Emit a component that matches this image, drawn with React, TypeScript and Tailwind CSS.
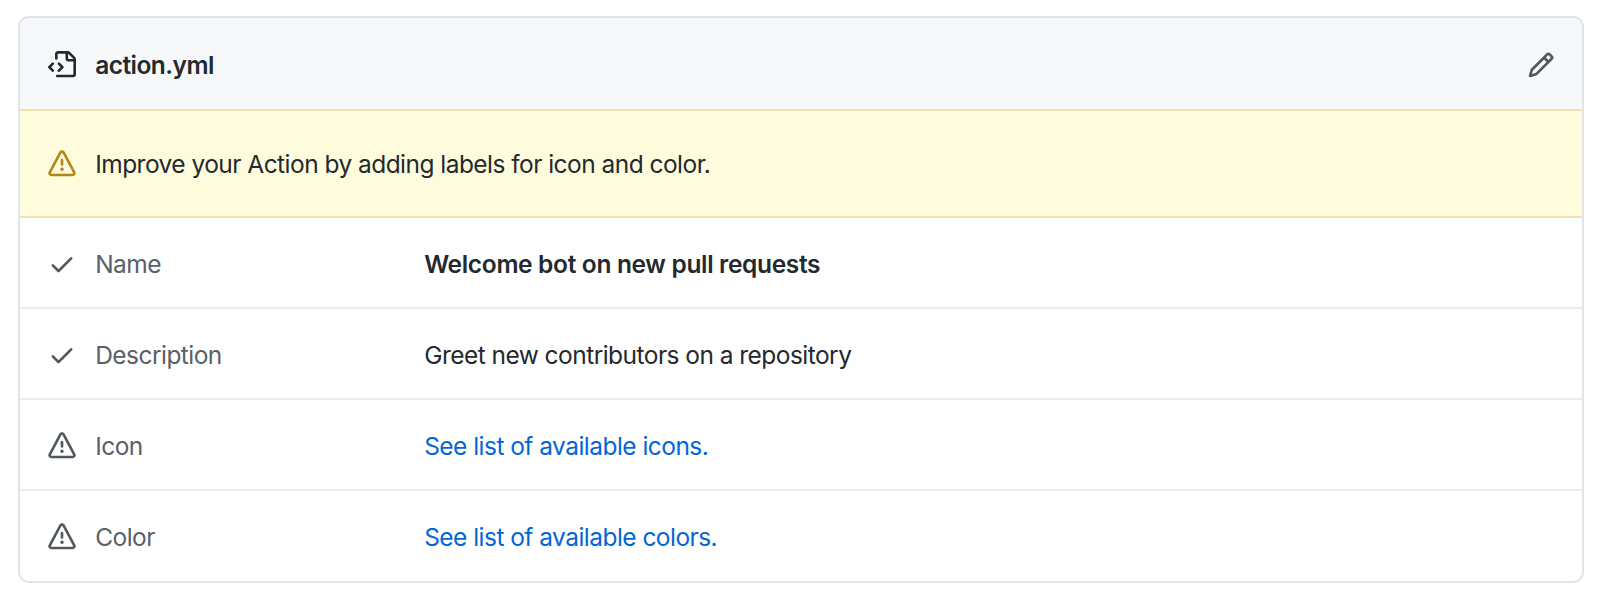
import type { ReactNode } from 'react';

const paths = {
  file: 'M4 1.75C4 .784 4.784 0 5.75 0h5.586c.464 0 .909.184 1.237.513l2.914 2.914c.329.328.513.773.513 1.237v8.586A1.75 1.75 0 0114.25 15h-9a.75.75 0 010-1.5h9a.25.25 0 00.25-.25V6h-2.75A1.75 1.75 0 0110 4.25V1.5H5.75a.25.25 0 00-.25.25v2.5a.75.75 0 01-1.5 0v-2.5zm7.5-.188V4.25c0 .138.112.25.25.25h2.688a.252.252 0 00-.011-.013l-2.914-2.914a.272.272 0 00-.013-.011zM5.72 6.72a.75.75 0 000 1.06l1.47 1.47-1.47 1.47a.75.75 0 101.06 1.06l2-2a.75.75 0 000-1.06l-2-2a.75.75 0 00-1.06 0zM3.28 7.78a.75.75 0 00-1.06-1.06l-2 2a.75.75 0 000 1.06l2 2a.75.75 0 001.06-1.06L1.81 9.25l1.47-1.47z',
  pencil: 'M11.013 1.427a1.75 1.75 0 012.474 0l1.086 1.086a1.75 1.75 0 010 2.474l-8.61 8.61c-.21.21-.47.364-.756.445l-3.251.93a.75.75 0 01-.927-.928l.929-3.25a1.75 1.75 0 01.445-.758l8.61-8.61zm1.414 1.06a.25.25 0 00-.354 0L10.811 3.75l1.439 1.44 1.263-1.263a.25.25 0 000-.354l-1.086-1.086zM11.189 6.25L9.75 4.81l-6.286 6.287a.25.25 0 00-.064.108l-.558 1.953 1.953-.558a.249.249 0 00.108-.064l6.286-6.286z',
  alert: 'M8.22 1.754a.25.25 0 00-.44 0L1.698 13.132a.25.25 0 00.22.368h12.164a.25.25 0 00.22-.368L8.22 1.754zm-1.763-.707c.659-1.234 2.427-1.234 3.086 0l6.082 11.378A1.75 1.75 0 0114.082 15H1.918a1.75 1.75 0 01-1.543-2.575L6.457 1.047zM9 11a1 1 0 11-2 0 1 1 0 012 0zm-.25-5.25a.75.75 0 00-1.5 0v2.5a.75.75 0 001.5 0v-2.5z',
  check: 'M13.78 4.22a.75.75 0 010 1.06l-7.25 7.25a.75.75 0 01-1.06 0L2.22 9.28a.75.75 0 011.06-1.06L6 10.94l6.72-6.72a.75.75 0 011.06 0z',
};

function Icon({ name, className }: { name: keyof typeof paths; className: string }) {
  return (
    <svg viewBox="0 0 16 16" className={`size-7 shrink-0 ${className}`} fill="currentColor" fillRule="evenodd" aria-hidden="true">
      <path d={paths[name]} />
    </svg>
  );
}

function Row({ icon, label, last, children }: { icon: 'check' | 'alert'; label: string; last?: boolean; children: ReactNode }) {
  return (
    <div className={`flex items-center pl-[27.5px] pt-0.5 ${last ? 'h-[89px]' : 'h-[91px] border-b-2 border-[#eaecef]'}`}>
      <Icon name={icon} className="text-[#50575f]" />
      <span className="ml-[19.7px] w-[329px] text-[#586069]">{label}</span>
      {children}
    </div>
  );
}

export default function App() {
  return (
    <div className="h-[592px] bg-white pl-[18px] pr-4 pt-4 font-['Inter','Liberation_Sans',sans-serif] text-[24.5px] leading-9 tracking-[-0.54px] text-[#24292e]">
      <section className="h-[567px] overflow-hidden rounded-[11px] border-2 border-[#e1e4e8]">
        <header className="flex h-[91px] items-center bg-[#f6f8fa] pl-[27.5px] pr-[27px] pt-0.5">
          <Icon name="file" className="text-[#24292e]" />
          <h1 className="ml-[19.7px] font-semibold">action.yml</h1>
          <Icon name="pencil" className="ml-auto text-[#50575f]" />
        </header>
        <div className="flex h-[109px] items-center border-y-2 border-[#f0e2ac] bg-[#fffbdd] pl-[27.5px] pt-px">
          <Icon name="alert" className="text-[#b08812]" />
          <p className="ml-[19.7px]">Improve your Action by adding labels for icon and color.</p>
        </div>
        <Row icon="check" label="Name">
          <strong className="font-semibold tracking-[-0.33px]">Welcome bot on new pull requests</strong>
        </Row>
        <Row icon="check" label="Description">
          <span>Greet new contributors on a repository</span>
        </Row>
        <Row icon="alert" label="Icon">
          <a href="#" className="text-[#0366d6]">See list of available icons.</a>
        </Row>
        <Row icon="alert" label="Color" last>
          <a href="#" className="text-[#0366d6]">See list of available colors.</a>
        </Row>
      </section>
    </div>
  );
}
